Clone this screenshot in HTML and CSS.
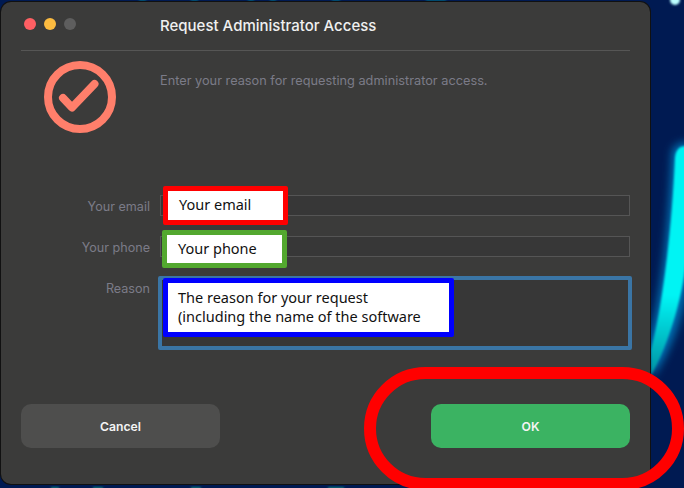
FILE: index.html
```html
<!DOCTYPE html>
<html lang="en">
<head>
    <meta charset="UTF-8">
    <meta name="viewport" content="width=device-width, initial-scale=1.0">
    <title>Request Administrator Access</title>
    <link rel="stylesheet" href="styles.css">
</head>
<body>
    <div class="screen">
        <!-- wallpaper behind the window -->
        <svg class="wallpaper" width="684" height="488" viewBox="0 0 684 488">
            <defs>
                <filter id="glow" x="-100%" y="-50%" width="300%" height="200%"><feGaussianBlur stdDeviation="4"/></filter>
                <filter id="soft" x="-50%" y="-50%" width="200%" height="200%"><feGaussianBlur stdDeviation="1"/></filter>
                <linearGradient id="fade" x1="0" y1="0" x2="0" y2="1">
                    <stop offset="0.65" stop-color="#00f4f4"/>
                    <stop offset="1" stop-color="#0090a0"/>
                </linearGradient>
            </defs>
            <path d="M672 152 Q674 142 690 142 L690 270 C686 310 672 350 652 378 L649 340 C660 300 668 240 672 152 Z" fill="#0070b4" filter="url(#glow)"/>
            <path d="M675 158 Q676 146 686 146 L686 262 C682 300 668 345 651 376 L651 350 C662 310 672 230 675 158 Z" fill="url(#fade)" filter="url(#soft)"/>
            <circle cx="675" cy="0" r="5" fill="#bff" filter="url(#soft)"/>
            <g fill="#0aa" filter="url(#soft)">
                <rect x="139" y="0" width="7" height="1"/><rect x="191" y="0" width="7" height="1"/><rect x="248" y="0" width="6" height="1"/><rect x="270" y="0" width="6" height="1"/><rect x="332" y="0" width="8" height="1"/><rect x="426" y="0" width="20" height="1"/>
            </g>
            <g fill="#0a8080" filter="url(#soft)">
                <rect x="51" y="487" width="8" height="2"/><rect x="93" y="487" width="10" height="2"/><rect x="191" y="487" width="10" height="2"/><rect x="328" y="487" width="16" height="2"/>
            </g>
        </svg>

        <div class="dialog">
            <div class="titlebar">
                <div class="lights">
                    <span class="light red"></span>
                    <span class="light yellow"></span>
                    <span class="light grey"></span>
                </div>
                <div class="title">Request Administrator Access</div>
            </div>

            <div class="intro">
                <svg class="icon" width="72" height="72" viewBox="0 0 72 72">
                    <circle cx="36" cy="36" r="32" fill="none" stroke="#ff7f6b" stroke-width="8"/>
                    <path d="M19 37 L28 46.5 L50.5 23" fill="none" stroke="#ff7f6b" stroke-width="8" stroke-linecap="round" stroke-linejoin="round"/>
                </svg>
                <p class="hint">Enter your reason for requesting administrator access.</p>
            </div>

            <form class="fields">
                <label class="label">Your email</label>
                <div class="input"></div>
                <label class="label">Your phone</label>
                <div class="input"></div>
                <label class="label">Reason</label>
                <div class="textarea"></div>
            </form>

            <div class="buttons">
                <div class="btn cancel">Cancel</div>
                <div class="btn ok">OK</div>
            </div>
        </div>

        <!-- annotations drawn over the screenshot -->
        <div class="note note-email">Your email</div>
        <div class="note note-phone">Your phone</div>
        <div class="note note-reason">The reason for your request<br>(including the name of the software</div>
        <div class="oval"></div>
    </div>
</body>
</html>
```

FILE: styles.css
```css
html, body{
    margin: 0;
    background: #001a52;
}
.screen{
    position: relative;
    width: 684px;
    height: 488px;
    overflow: hidden;
    font-family: Inter, "Liberation Sans", sans-serif;
}
.wallpaper{
    position: absolute;
    left: 0;
    top: 0;
}
/* Window */
.dialog{
    position: relative;
    box-sizing: border-box;
    width: 649px;
    height: 482px;
    margin: 2px 0 0 1px;
    padding: 0 20px;
    background: #3b3b3a;
    border-radius: 10px;
    box-shadow: 0 0 0 1px #111;
    display: flex;
    flex-direction: column;
}
.titlebar{
    height: 48px;
    border-bottom: 1px solid #565655;
    display: flex;
    align-items: center;
    flex-shrink: 0;
}
.lights{
    width: 139px;
    padding-left: 3px;
    box-sizing: border-box;
    display: flex;
    gap: 8px;
    margin-top: -4px;
}
.light{
    width: 12px;
    height: 12px;
    border-radius: 50%;
}
.red{ background: #ff5f63; }
.yellow{ background: #fdbc40; }
.grey{ background: #5e5e5e; }
.title{
    font-size: 15px;
    font-weight: 500;
    color: #f0f0f0;
    margin-top: -1px;
}
.intro{
    height: 144px;
    display: flex;
    flex-shrink: 0;
}
.icon{
    margin: 10px 0 0 23px;
}
.hint{
    margin: 22px 0 0 44px;
    font-size: 12.75px;
    color: #7b7b88;
}
/* Form */
.fields{
    display: grid;
    grid-template-columns: 129px 470px;
    column-gap: 10px;
    row-gap: 20px;
}
.label{
    height: 21px;
    font-size: 12.6px;
    line-height: 23px;
    text-align: right;
    color: #7b7b88;
}
.input{
    height: 21px;
    box-sizing: border-box;
    border: 1px solid #555;
    background: #373737;
}
.textarea{
    height: 74px;
    box-sizing: border-box;
    margin: -1px -2px 0 -2px;
    border: 4px solid #3a75a5;
    border-radius: 2px;
    background: #373737;
}
.buttons{
    display: flex;
    justify-content: space-between;
    margin-top: 54px;
}
.btn{
    width: 199px;
    height: 44px;
    line-height: 46px;
    border-radius: 10px;
    text-align: center;
    font-size: 12.2px;
    font-weight: 600;
    color: #f4f4f4;
}
.cancel{
    background: #4e4e4d;
}
.ok{
    background: #3bb362;
}
/* Annotations */
.note{
    position: absolute;
    box-sizing: border-box;
    background: #fff;
    color: #111;
    font-family: "Noto Sans", "Liberation Sans", sans-serif;
    font-size: 14.5px;
    border-radius: 2px;
    white-space: nowrap;
}
.note-email{
    left: 163px;
    top: 186px;
    width: 125px;
    height: 39px;
    padding-left: 11px;
    line-height: 27px;
    border: 5px solid #ff0000;
}
.note-phone{
    left: 162px;
    top: 230px;
    width: 125px;
    height: 38px;
    padding-left: 11px;
    line-height: 27px;
    border: 5px solid #53a82f;
}
.note-reason{
    left: 163px;
    top: 278px;
    width: 291px;
    height: 59px;
    padding: 5px 0 0 10px;
    line-height: 19px;
    border: 5px solid #0000ff;
}
.oval{
    position: absolute;
    box-sizing: border-box;
    left: 364px;
    top: 367px;
    width: 320px;
    height: 123px;
    border: 12px solid #ff0000;
    border-radius: 62px;
}
```
